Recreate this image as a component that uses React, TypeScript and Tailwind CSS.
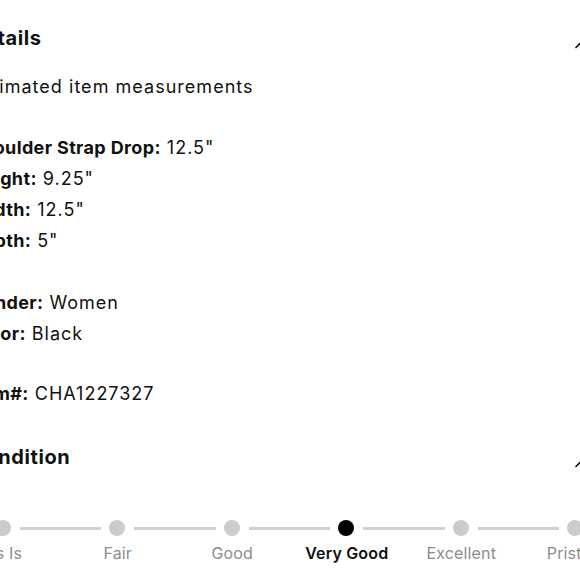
import React from "react";

const font = { fontFamily: "Inter, 'Noto Sans', sans-serif" };

function Chevron() {
  return (
    <svg width="20" height="20" viewBox="0 0 24 24" fill="none" stroke="#111" strokeWidth="2" strokeLinecap="round" strokeLinejoin="round">
      <path d="m18 15-6-6-6 6" />
    </svg>
  );
}

function Row({ label, value }: { label: string; value: string }) {
  return (
    <div className="text-[18px] leading-[31px] text-[#111]">
      <span className="font-bold tracking-[0.02em]">{label}</span>
      <span className="tracking-[0.055em]"> {value}</span>
    </div>
  );
}

const steps = ["As Is", "Fair", "Good", "Very Good", "Excellent", "Pristine"];

export default function App() {
  return (
    <div className="w-[580px] h-[580px] overflow-hidden bg-white" style={font}>
      <div className="ml-[-30px] w-[621px] pt-[24px]">
        <div className="flex items-start justify-between h-[28px]">
          <div className="text-[20px] leading-[28px] font-bold tracking-[0.03em] text-[#111]">Details</div>
          <div className="mt-[11px]"><Chevron /></div>
        </div>
        <div className="mt-[21px] text-[18px] leading-[28px] tracking-[0.057em] text-[#111]">Estimated item measurements</div>
        <div className="mt-[31px]">
          <Row label="Shoulder Strap Drop:" value={'12.5"'} />
          <Row label="Height:" value={'9.25"'} />
          <Row label="Width:" value={'12.5"'} />
          <Row label="Depth:" value={'5"'} />
        </div>
        <div className="mt-[31px]">
          <Row label="Gender:" value="Women" />
          <Row label="Color:" value="Black" />
        </div>
        <div className="mt-[29px]">
          <Row label="Item#:" value="CHA1227327" />
        </div>
        <div className="mt-[34px] flex items-start justify-between h-[28px]">
          <div className="text-[20px] leading-[28px] font-bold tracking-[0.03em] text-[#111]">Condition</div>
          <div className="mt-[11px]"><Chevron /></div>
        </div>
      </div>
      <div className="ml-[-54px] mt-[49px] grid grid-cols-[repeat(6,114.5px)]">
        {steps.map((s, i) => {
          const active = s === "Very Good";
          return (
            <div key={s} className="flex flex-col items-center">
              <div className="flex items-center w-full h-[16px]">
                <div className={`flex-1 h-[3px] mr-[8px] ${i === 0 ? "bg-transparent" : "bg-[#d0d0d0]"}`} />
                <div className={`w-[16px] h-[16px] rounded-full ${active ? "bg-black" : "bg-[#cccccc]"}`} />
                <div className={`flex-1 h-[3px] ml-[9px] ${i === steps.length - 1 ? "bg-transparent" : "bg-[#d0d0d0]"}`} />
              </div>
              <div className={`mt-[5px] text-[16px] leading-[24px] whitespace-nowrap tracking-[0.01em] ${active ? "font-semibold text-[#111]" : "text-[#8c8c8c]"}`}>{s}</div>
            </div>
          );
        })}
      </div>
    </div>
  );
}
